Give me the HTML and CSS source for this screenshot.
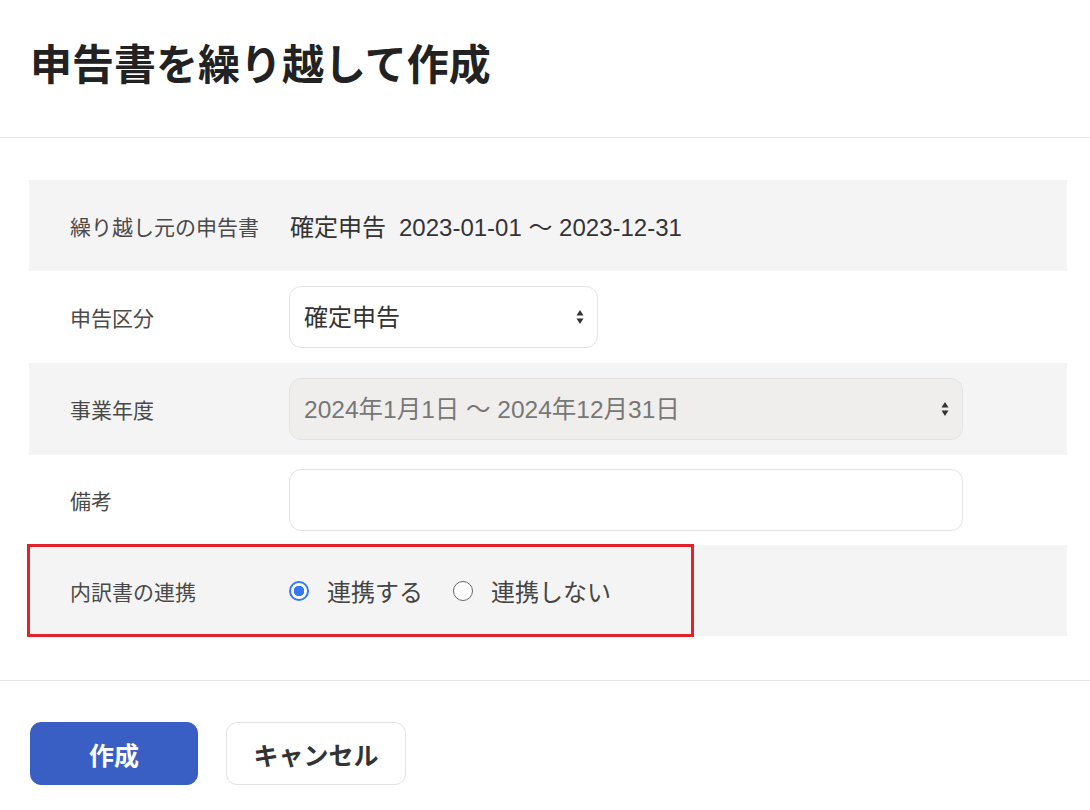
FILE: index.html
```html
<!DOCTYPE html>
<html lang="ja">

<head>
  <meta charset="UTF-8">
  <meta name="viewport" content="width=device-width, initial-scale=1.0">
  <title>申告書を繰り越して作成</title>
  <link rel="stylesheet" href="styles.css">
</head>

<body>
  <div class="dialog">
    <!-- タイトル -->
    <div class="dialog-head">
      <h1 class="dialog-title">申告書を繰り越して作成</h1>
    </div>

    <!-- フォーム -->
    <div class="dialog-body">
      <div class="form-row shaded">
        <div class="form-label">繰り越し元の申告書</div>
        <div class="form-value">
          <span class="kind">確定申告</span><span>2023-01-01 ～ 2023-12-31</span>
        </div>
      </div>

      <div class="form-row with-input">
        <div class="form-label">申告区分</div>
        <div class="select small">
          <select>
            <option>確定申告</option>
            <option>修正申告</option>
          </select>
          <svg class="arrows" width="8" height="16" viewBox="0 0 8 16">
            <path d="M4 1 L7.5 6.5 L0.5 6.5 Z" fill="#333" />
            <path d="M4 15 L7.5 9.5 L0.5 9.5 Z" fill="#333" />
          </svg>
        </div>
      </div>

      <div class="form-row shaded with-input">
        <div class="form-label">事業年度</div>
        <div class="select wide">
          <select disabled>
            <option>2024年1月1日 ～ 2024年12月31日</option>
          </select>
          <svg class="arrows" width="8" height="16" viewBox="0 0 8 16">
            <path d="M4 1 L7.5 6.5 L0.5 6.5 Z" fill="#333" />
            <path d="M4 15 L7.5 9.5 L0.5 9.5 Z" fill="#333" />
          </svg>
        </div>
      </div>

      <div class="form-row with-input tight">
        <div class="form-label">備考</div>
        <input class="text-input" type="text">
      </div>

      <div class="form-row shaded">
        <div class="form-label">内訳書の連携</div>
        <div class="radio-group">
          <label class="radio checked"><span class="dot"></span>連携する</label>
          <label class="radio"><span class="dot"></span>連携しない</label>
        </div>
        <!-- 注目枠 -->
        <div class="highlight"></div>
      </div>
    </div>

    <!-- ボタン -->
    <div class="dialog-foot">
      <button class="btn primary">作成</button>
      <button class="btn">キャンセル</button>
    </div>
  </div>
</body>

</html>
```

FILE: styles.css
```css
* {
  margin: 0;
  padding: 0;
  box-sizing: border-box;
}

body {
  background-color: #fff;
  font-family: "Liberation Sans", "Noto Sans CJK JP", sans-serif;
  color: #333;
}

.dialog {
  width: 1090px;
}

/* タイトル部分 */
.dialog-head {
  padding: 37px 30px 50px;
  border-bottom: 1px solid #e6e6e6;
}

.dialog-title {
  font-family: "Noto Sans CJK JP", sans-serif;
  font-size: 42px;
  line-height: 50px;
  font-weight: 700;
  color: #222;
}

/* フォーム部分 */
.dialog-body {
  padding: 42px 23px 44px 29px;
  border-bottom: 1px solid #e6e6e6;
}

.form-row {
  position: relative;
  display: flex;
  align-items: center;
  min-height: 91px;
}

.form-row.with-input {
  padding: 15px 0;
}

.form-row.tight {
  padding: 14px 0;
  min-height: 90px;
}

.form-row.shaded {
  background-color: #f5f4f4;
}

.form-label {
  width: 260px;
  padding-left: 41px;
  font-size: 21px;
  color: #4a4a4a;
  flex-shrink: 0;
}

.form-value {
  font-size: 24px;
  color: #333;
  padding-left: 1px;
}

.form-value .kind {
  margin-right: 13px;
}

/* セレクト */
.select {
  position: relative;
  height: 62px;
}

.select.small {
  width: 309px;
}

.select.wide {
  width: 674px;
}

.select select {
  width: 100%;
  height: 100%;
  appearance: none;
  -webkit-appearance: none;
  border: 1px solid #e3e3e3;
  border-radius: 12px;
  background-color: #fff;
  padding: 0 40px 0 14px;
  font-family: inherit;
  font-size: 24px;
  color: #333;
  outline: none;
}

.select select:disabled {
  background-color: #efeeed;
  color: #777;
  opacity: 1;
  font-size: 24.5px;
}

.select .arrows {
  position: absolute;
  right: 14px;
  top: 23px;
}

.text-input {
  width: 674px;
  height: 62px;
  border: 1px solid #e3e3e3;
  border-radius: 12px;
  background-color: #fff;
  outline: none;
}

/* ラジオボタン */
.radio-group {
  display: flex;
  align-items: center;
  gap: 30px;
}

.radio {
  display: flex;
  align-items: center;
  gap: 18px;
  font-size: 24px;
  color: #444;
}

.radio .dot {
  width: 20px;
  height: 20px;
  border-radius: 50%;
  border: 1.5px solid #666;
  background-color: #fff;
}

.radio.checked .dot {
  border: 2px solid #3478f6;
  background: radial-gradient(circle, #3478f6 0, #3478f6 5px, #fff 5.5px);
}

.highlight {
  position: absolute;
  left: -2px;
  top: -1px;
  width: 667px;
  height: 93px;
  border: 3px solid #e3212b;
  pointer-events: none;
}

/* ボタン */
.dialog-foot {
  display: flex;
  gap: 28px;
  padding: 41px 30px 25px;
}

.btn {
  height: 63px;
  width: 180px;
  border: 1px solid #e3e3e3;
  border-radius: 11px;
  background-color: #fff;
  font-family: "Noto Sans CJK JP", sans-serif;
  font-size: 25px;
  font-weight: 700;
  color: #333;
}

.btn.primary {
  width: 168px;
  background-color: #3a5fc4;
  border-color: #3a5fc4;
  color: #fff;
}
```
